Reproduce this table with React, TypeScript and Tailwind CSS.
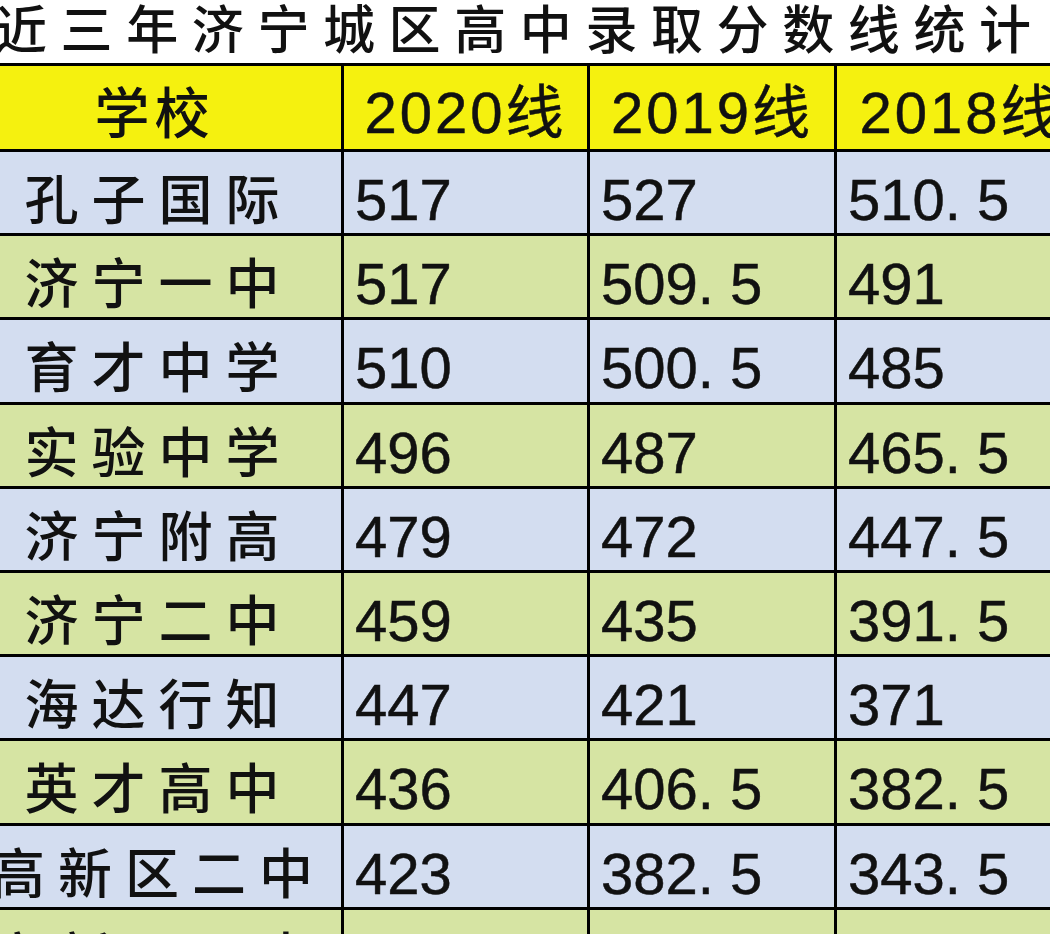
import React from "react";

const rows: [string, string, string, string][] = [
  ["孔子国际", "517", "527", "510. 5"],
  ["济宁一中", "517", "509. 5", "491"],
  ["育才中学", "510", "500. 5", "485"],
  ["实验中学", "496", "487", "465. 5"],
  ["济宁附高", "479", "472", "447. 5"],
  ["济宁二中", "459", "435", "391. 5"],
  ["海达行知", "447", "421", "371"],
  ["英才高中", "436", "406. 5", "382. 5"],
  ["高新区二中", "423", "382. 5", "343. 5"],
  ["高新区一中", "410", "375", "341. 5"],
];

const cjk = "font-['Noto_Sans_CJK_SC',sans-serif] font-medium";
const num = "font-['Liberation_Sans','Noto_Sans_CJK_SC',sans-serif] [-webkit-text-stroke:0.5px_#111]";

const App = () => {
  return (
    <div className="w-[1050px] h-[934px] overflow-hidden bg-white text-[#111]">
      <div
        className={`h-[63px] flex items-start pt-[1px] ml-[-5px] whitespace-nowrap text-[52px] leading-none tracking-[13.6px] ${cjk}`}
      >
        近三年济宁城区高中录取分数线统计
      </div>

      <div className="grid grid-cols-[344px_246px_247px_250px] w-[1087px] border-t-[3px] border-black">
        {/* header */}
        <div
          className={`h-[86px] bg-[#f5f10f] border-r-[3px] border-b-[3px] border-black flex justify-center items-start pt-[16px] pr-[32px] text-[55px] leading-none tracking-[5px] ${cjk}`}
        >
          学校
        </div>
        {["2020线", "2019线", "2018线"].map((h) => (
          <div
            key={h}
            className={`h-[86px] bg-[#f5f10f] border-r-[3px] border-b-[3px] border-black flex justify-center items-start pt-[18px] text-[58px] leading-none tracking-[3px] whitespace-nowrap ${num}`}
          >
            {h}
          </div>
        ))}

        {rows.map((r, i) => {
          const bg = i % 2 === 0 ? "bg-[#d3ddf0]" : "bg-[#d6e4a3]";
          return (
            <React.Fragment key={r[0]}>
              <div
                className={`h-[84.2px] ${bg} border-r-[3px] border-b-[3px] border-black flex justify-center items-start pt-[18px] pr-[24px] whitespace-nowrap text-[54px] leading-none tracking-[13px] ${cjk}`}
              >
                {r[0]}
              </div>
              {r.slice(1).map((v, j) => (
                <div
                  key={j}
                  className={`h-[84.2px] ${bg} border-r-[3px] border-b-[3px] border-black flex items-start pt-[19px] pl-[11px] whitespace-pre text-[58px] leading-none ${num}`}
                >
                  {v}
                </div>
              ))}
            </React.Fragment>
          );
        })}
      </div>
    </div>
  );
};

export default App;
